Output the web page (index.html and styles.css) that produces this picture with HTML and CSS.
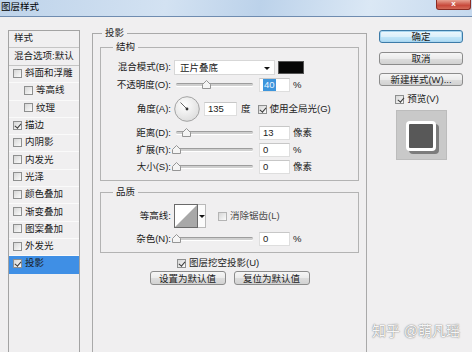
FILE: index.html
```html
<!DOCTYPE html>
<html lang="zh-CN">
<head>
    <meta charset="UTF-8">
    <meta name="viewport" content="width=device-width, initial-scale=1.0">
    <title>图层样式</title>
    <link rel="stylesheet" href="styles.css">
</head>
<body>

<div class="titlebar">
    <span class="title">图层样式</span>
    <span class="close">x</span>
</div>

<div class="dialog">
    <ul class="styles">
        <li class="head">样式</li>
        <li class="head">混合选项:默认</li>
        <li><span class="cb"></span>斜面和浮雕</li>
        <li class="sub"><span class="cb"></span>等高线</li>
        <li class="sub"><span class="cb"></span>纹理</li>
        <li><span class="cb on"></span>描边</li>
        <li><span class="cb"></span>内阴影</li>
        <li><span class="cb"></span>内发光</li>
        <li><span class="cb"></span>光泽</li>
        <li><span class="cb"></span>颜色叠加</li>
        <li><span class="cb"></span>渐变叠加</li>
        <li><span class="cb"></span>图案叠加</li>
        <li><span class="cb"></span>外发光</li>
        <li class="selected"><span class="cb on"></span>投影</li>
    </ul>

    <fieldset class="panel">
        <legend>投影</legend>

        <fieldset class="group structure">
            <legend>结构</legend>
            <div class="row">
                <span class="label">混合模式(B):</span>
                <div class="select">正片叠底<span class="arrow"></span></div>
                <span class="swatch"></span>
            </div>
            <div class="row r-opacity">
                <span class="label">不透明度(O):</span>
                <div class="slider"><div class="track"><svg class="thumb" style="left:40%" width="9" height="9" viewBox="0 0 9 9"><path d="M0.5 8.5V4.5L4.5 0.5L8.5 4.5V8.5Z"/></svg></div></div>
                <div class="field"><span class="sel">40</span></div>
                <span class="unit">%</span>
            </div>
            <div class="row r-angle">
                <span class="label">角度(A):</span>
                <svg class="dial" width="26" height="26" viewBox="0 0 26 26">
                    <defs>
                        <radialGradient id="dialFill" cx="40%" cy="35%" r="70%">
                            <stop offset="0" stop-color="#ffffff"/>
                            <stop offset="1" stop-color="#dcdcdc"/>
                        </radialGradient>
                    </defs>
                    <circle cx="13" cy="13" r="12.3" fill="url(#dialFill)" stroke="#9b9b9b" stroke-width="0.9"/>
                    <line x1="13" y1="13" x2="6.5" y2="6.5" stroke="#555" stroke-width="0.9"/>
                    <circle cx="13" cy="13" r="1.4" fill="#333"/>
                </svg>
                <div class="field angle">135</div>
                <span class="unit">度</span>
                <span class="cb on global"></span><span>使用全局光(G)</span>
            </div>
            <div class="row r-distance">
                <span class="label">距离(D):</span>
                <div class="slider"><div class="track"><svg class="thumb" style="left:14%" width="9" height="9" viewBox="0 0 9 9"><path d="M0.5 8.5V4.5L4.5 0.5L8.5 4.5V8.5Z"/></svg></div></div>
                <div class="field">13</div>
                <span class="unit">像素</span>
            </div>
            <div class="row r-tight">
                <span class="label">扩展(R):</span>
                <div class="slider"><div class="track"><svg class="thumb" style="left:1%" width="9" height="9" viewBox="0 0 9 9"><path d="M0.5 8.5V4.5L4.5 0.5L8.5 4.5V8.5Z"/></svg></div></div>
                <div class="field">0</div>
                <span class="unit">%</span>
            </div>
            <div class="row r-tight">
                <span class="label">大小(S):</span>
                <div class="slider"><div class="track"><svg class="thumb" style="left:1%" width="9" height="9" viewBox="0 0 9 9"><path d="M0.5 8.5V4.5L4.5 0.5L8.5 4.5V8.5Z"/></svg></div></div>
                <div class="field">0</div>
                <span class="unit">像素</span>
            </div>
        </fieldset>

        <fieldset class="group quality">
            <legend>品质</legend>
            <div class="row r-contour">
                <span class="label">等高线:</span>
                <div class="contour">
                    <span class="curve"><svg width="22" height="22" viewBox="0 0 22 22"><polygon points="0,22 22,0 22,22" fill="#a8a8a8"/></svg></span>
                    <span class="drop"><span class="arrow"></span></span>
                </div>
                <span class="cb smooth"></span><span class="muted">消除锯齿(L)</span>
            </div>
            <div class="row r-noise">
                <span class="label">杂色(N):</span>
                <div class="slider"><div class="track"><svg class="thumb" style="left:1%" width="9" height="9" viewBox="0 0 9 9"><path d="M0.5 8.5V4.5L4.5 0.5L8.5 4.5V8.5Z"/></svg></div></div>
                <div class="field">0</div>
                <span class="unit">%</span>
            </div>
        </fieldset>

        <div class="knockout"><span class="cb on"></span>图层挖空投影(U)</div>
        <div class="defaults">
            <button class="btn">设置为默认值</button>
            <button class="btn">复位为默认值</button>
        </div>
    </fieldset>

    <div class="actions">
        <button class="btn primary">确定</button>
        <button class="btn">取消</button>
        <button class="btn">新建样式(W)...</button>
        <div class="preview-toggle"><span class="cb on"></span>预览(V)</div>
        <div class="preview"><span class="sample"></span></div>
    </div>
</div>

<div class="watermark">知乎 @萌凡瑶</div>

</body>
</html>
```

FILE: styles.css
```css
* { box-sizing: border-box; }
html, body { margin: 0; height: 352px; overflow: hidden; }
body {
    position: relative;
    background: #f0eff0;
    color: #1b1b1b;
    font: 9.5px/12px "Liberation Sans", "Noto Sans CJK SC", sans-serif;
}

/* window title */
.titlebar {
    height: 17px;
    display: flex;
    justify-content: space-between;
    background: linear-gradient(100deg, #bed3ea 0%, #d3e2f2 35%, #bcd2ea 55%, #dbe8f5 78%, #c6d9ee 100%);
    border-bottom: 1px solid #6f8cb0;
}
.title { padding: 1px 0 0 1px; color: #000; }
.close {
    width: 35px;
    height: 10px;
    margin-right: 1px;
    border: 1px solid #8b2b22;
    border-top: none;
    border-radius: 0 0 3px 3px;
    background: linear-gradient(#e7a191, #c8493b 60%, #d36a58);
    color: #fff;
    font-weight: bold;
    font-size: 8px;
    line-height: 8px;
    text-align: center;
}

.dialog { display: flex; align-items: flex-start; padding-left: 8px; }

/* left list, runs off the bottom of the window */
.styles {
    list-style: none;
    margin: 13px 0 0;
    padding: 0;
    width: 72px;
    height: 322px;
    border: 1px solid #a3a3a3;
    border-bottom: none;
    background: #f0eff0;
}
.styles li {
    display: flex;
    align-items: center;
    height: 17.3px;
    padding: 0 0 2px 4px;
    border-bottom: 1px solid #fafafa;
    white-space: nowrap;
}
.styles li .cb { margin-right: 3px; }
.styles .head { height: 17px; padding-left: 5px; border-bottom: 1px solid #c5c5c5; }
.styles .head + .head { height: 18px; }
.styles .sub { padding-left: 15px; }
.styles .selected { background: #3f8fe5; border-bottom-color: #3f8fe5; }

/* checkbox */
.cb {
    position: relative;
    display: inline-block;
    flex: none;
    width: 9px;
    height: 9px;
    border: 1px solid #8e8f8f;
    background: linear-gradient(135deg, #d6d6d6, #fbfbfb);
}
.cb.on::after {
    content: "";
    position: absolute;
    left: 2.4px;
    top: 0;
    width: 2.5px;
    height: 5px;
    border: solid #3a3a3a;
    border-width: 0 1.3px 1.3px 0;
    transform: rotate(40deg);
}

/* main panel */
fieldset { margin: 0; min-width: 0; }
legend { padding: 0 3px; line-height: 12px; }
.panel {
    margin: 10px 0 0 12px;
    padding: 2px 7px 0;
    width: 275px;
    height: 325px;
    border: 1px solid #a9a9a9;
    border-bottom: none;
}
.panel > legend { margin-left: 2px; }
.group { padding: 6px 6px 5px; border: 1px solid #b3b3b3; }
.group > legend { margin-left: 6px; }
.quality { margin-top: 5px; }

.row { display: flex; align-items: center; height: 16px; white-space: nowrap; }
.label { width: 64px; margin-right: 3px; text-align: right; }
.r-opacity { margin-top: 2px; }
.r-angle { height: 26px; margin-top: 3px; }
.r-distance { margin-top: 3px; }
.r-tight { margin-top: 1px; }
.r-contour { height: 24px; }
.r-noise { margin-top: 3px; }

.select {
    position: relative;
    width: 101px;
    height: 15px;
    padding-left: 5px;
    line-height: 14px;
    background: #fff;
    border: 1px solid #d7d7d7;
}
.select .arrow { position: absolute; right: 4px; top: 6px; }
.arrow {
    display: block;
    width: 0;
    height: 0;
    border-left: 3px solid transparent;
    border-right: 3px solid transparent;
    border-top: 3px solid #111;
}
.swatch {
    width: 26px;
    height: 13px;
    margin-left: 3px;
    background: #070707;
    border: 1px solid #555;
}

.slider { width: 81px; height: 16px; margin-right: 4px; padding: 6px 2px 0; }
.track {
    position: relative;
    height: 3px;
    border-radius: 2px;
    background: #cfcfcf;
    border-top: 1px solid #9d9d9d;
    box-shadow: 0 1px 0 #fff;
}
.thumb { position: absolute; top: -4px; margin-left: -4.5px; }
.thumb path { fill: #f4f4f4; stroke: #8a8a8a; stroke-width: 0.9; }

.field {
    width: 31px;
    height: 14px;
    padding-left: 3px;
    line-height: 12px;
    background: #fff;
    border: 1px solid #dedede;
    border-top-color: #c7c7c7;
}
.field.angle { width: 33px; margin-left: 4px; }
.sel { display: inline-block; padding: 0 1px; background: #3d95dc; color: #eaf4ff; }
.unit { margin-left: 3px; }
.r-angle .unit { margin-left: 4px; }
.dial { flex: none; }
.cb.global { margin: 0 3px 0 7px; }

.contour { display: flex; height: 24px; }
.curve {
    width: 24px;
    height: 24px;
    border: 1px solid #6a6a6a;
    background: #fff;
}
.curve svg { display: block; }
.drop {
    display: flex;
    align-items: center;
    justify-content: center;
    width: 8px;
    border: 1px solid #b9b9b9;
    border-left: none;
    background: #fbfbfb;
}
.cb.smooth { margin: 0 3px 0 12px; border-color: #b4b4b4; }
.muted { color: #4a4a4a; }

.knockout {
    display: flex;
    align-items: center;
    height: 14px;
    margin: 3px 0 0 77px;
}
.knockout .cb { margin-right: 3px; }
.defaults { display: flex; justify-content: center; gap: 8px; margin-top: 1px; }
.defaults .btn { width: 76px; height: 14px; }

/* buttons */
.btn {
    height: 13px;
    padding: 0;
    border: 1px solid #8c8c8c;
    border-radius: 3px;
    background: linear-gradient(#f6f6f6, #ebebeb 50%, #dddddd 51%, #d2d2d2);
    color: #1b1b1b;
    font: inherit;
    line-height: 11px;
    text-align: center;
}

/* right column */
.actions {
    display: flex;
    flex-direction: column;
    align-items: center;
    width: 84px;
    margin: 13px 0 0 12px;
}
.actions .btn { width: 100%; }
.actions .btn + .btn { margin-top: 9px; }
.actions .btn + .btn + .btn { margin-top: 8px; }
.btn.primary {
    border-color: #3d7ba8;
    background: linear-gradient(#edf7fd, #dcf0fb 50%, #c3e6f9 51%, #acdaf3);
    box-shadow: 0 0 0 1px #a9d6f0 inset;
}
.preview-toggle { display: flex; align-items: center; height: 12px; margin-top: 7px; padding-right: 8px; }
.preview-toggle .cb { margin-right: 3px; }
.preview {
    display: flex;
    align-items: center;
    justify-content: center;
    width: 51px;
    height: 50px;
    margin-top: 5px;
    background: #c9c9c9;
    border: 1px solid #bcbcbc;
}
.sample {
    width: 30px;
    height: 30px;
    margin: 1px 1px 0 0;
    border: 3px solid #fff;
    border-radius: 4px;
    background: #585858;
    box-shadow: 3px 3px 0 #7c7c7c;
}

.watermark {
    position: absolute;
    right: 12px;
    top: 322px;
    font-size: 14px;
    line-height: 18px;
    color: #f6f6f6;
    text-shadow: 0 0 1px #7a7a7a, 0 0 2px #9a9a9a;
}
```
